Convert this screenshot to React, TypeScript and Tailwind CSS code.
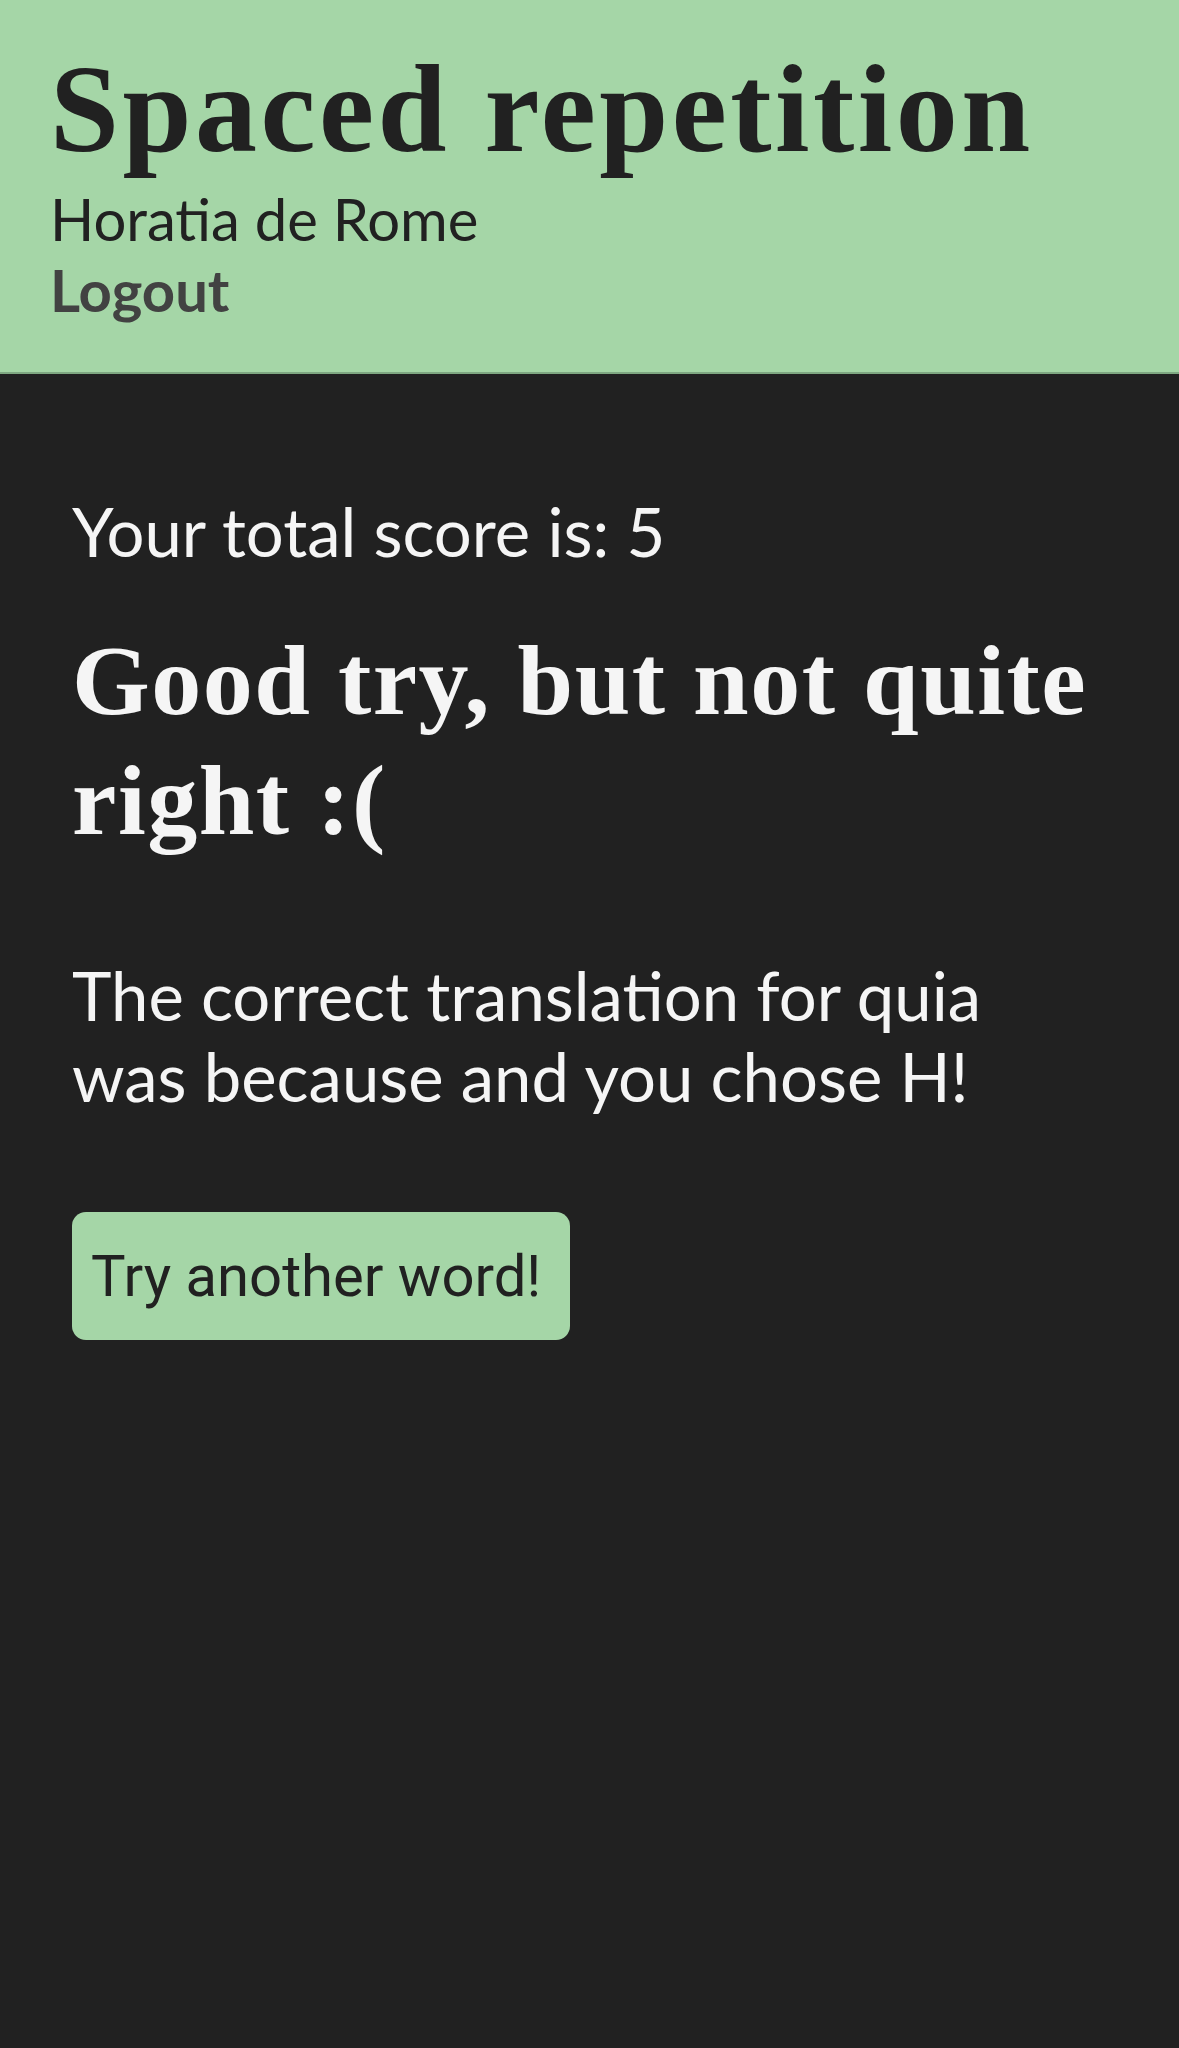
import React from "react";

export default function App() {
  return (
    <div className="min-h-[2048px] w-full bg-[#212121] font-['Lato',sans-serif]">
      <header className="flex flex-col bg-[#a5d6a7] px-[50px] pt-[48px] pb-[47px] border-b-[2px] border-[#7fa882]">
        <h1 className="font-['Liberation_Serif',serif] text-[124px] leading-none font-bold tracking-[3.5px] text-[#212121]">
          Spaced repetition
        </h1>
        <div className="mt-[11px] text-[58px] leading-[71px] text-[#212121]">
          Horatia de Rome
        </div>
        <div className="text-[58px] leading-[71px] font-bold text-[#424242]">
          Logout
        </div>
      </header>
      <main className="flex flex-col items-start px-[72px]">
        <p className="mt-[124px] text-[67px] leading-none text-[#f5f5f5]">
          Your total score is: 5
        </p>
        <h2 className="mt-[56px] font-['Liberation_Serif',serif] text-[100px] leading-[120px] font-bold tracking-[1.5px] text-[#f5f5f5]">
          Good try, but not quite right :(
        </h2>
        <p className="mt-[94px] text-[67px] leading-[81px] text-[#f5f5f5]">
          The correct translation for quia was because and you chose H!
        </p>
        <button className="mt-[95px] flex h-[128px] w-[498px] items-center rounded-[14px] bg-[#a5d6a7] pl-[19px] font-['Roboto',sans-serif] text-[58px] text-[#212121]">
          Try another word!
        </button>
      </main>
    </div>
  );
}
